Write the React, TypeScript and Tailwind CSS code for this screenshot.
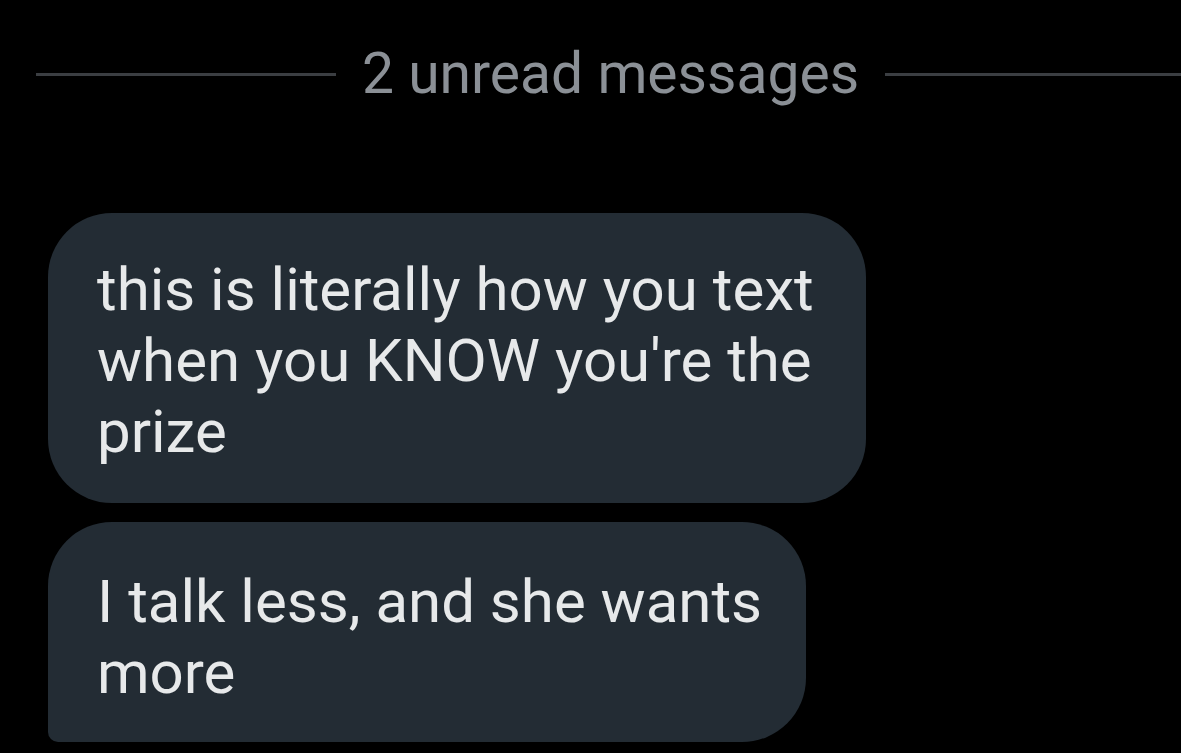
export default function App() {
  return (
    <div
      className="w-[1181px] h-[753px] overflow-hidden bg-black text-[#e7e9ea]"
      style={{ fontFamily: 'Roboto, "Noto Sans", sans-serif' }}
    >
      {/* unread divider */}
      <div className="flex items-center pl-[36px] pt-[44px] h-[104px]">
        <div className="w-[300px] h-[3px] bg-[#3b3e42]" />
        <div className="px-[26px] text-[57px] leading-[60px] text-[#8b9096] whitespace-nowrap">
          2 unread messages
        </div>
        <div className="flex-1 h-[3px] bg-[#3b3e42]" />
      </div>

      <div className="flex flex-col items-start gap-[19px] pl-[48px] pt-[109px]">
        <div className="w-[818px] rounded-[64px] bg-[#232c34] pl-[49px] pr-[24px] pt-[41px] pb-[36px] text-[60px] leading-[71px]">
          this is literally how you text when you KNOW you're the prize
        </div>
        <div className="w-[758px] rounded-[64px] rounded-bl-[10px] bg-[#232c34] pl-[49px] pr-[24px] pt-[44px] pb-[34px] text-[60px] leading-[71px]">
          I talk less, and she wants more
        </div>
      </div>
    </div>
  );
}
